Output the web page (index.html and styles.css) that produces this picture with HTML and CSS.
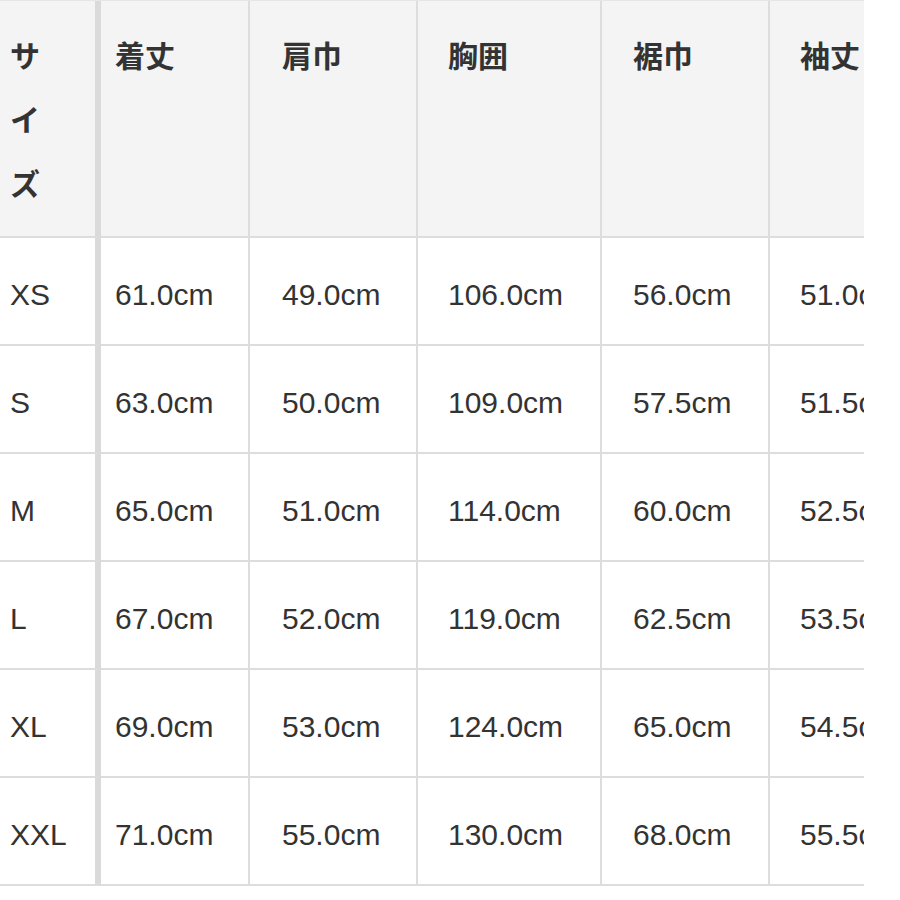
FILE: index.html
```html
<!DOCTYPE html>
<html lang="ja">
<head>
<meta charset="utf-8">
<link rel="stylesheet" href="styles.css">
</head>
<body>
<div class="wrap">
  <div class="grid">
    <div class="cell head c1">サ<br>イ<br>ズ</div>
    <div class="cell head c2">着丈</div>
    <div class="cell head c3">肩巾</div>
    <div class="cell head c4">胸囲</div>
    <div class="cell head c5">裾巾</div>
    <div class="cell head c6">袖丈</div>

    <div class="cell c1">XS</div>
    <div class="cell c2">61.0cm</div>
    <div class="cell c3">49.0cm</div>
    <div class="cell c4">106.0cm</div>
    <div class="cell c5">56.0cm</div>
    <div class="cell c6">51.0cm</div>

    <div class="cell c1">S</div>
    <div class="cell c2">63.0cm</div>
    <div class="cell c3">50.0cm</div>
    <div class="cell c4">109.0cm</div>
    <div class="cell c5">57.5cm</div>
    <div class="cell c6">51.5cm</div>

    <div class="cell c1">M</div>
    <div class="cell c2">65.0cm</div>
    <div class="cell c3">51.0cm</div>
    <div class="cell c4">114.0cm</div>
    <div class="cell c5">60.0cm</div>
    <div class="cell c6">52.5cm</div>

    <div class="cell c1">L</div>
    <div class="cell c2">67.0cm</div>
    <div class="cell c3">52.0cm</div>
    <div class="cell c4">119.0cm</div>
    <div class="cell c5">62.5cm</div>
    <div class="cell c6">53.5cm</div>

    <div class="cell c1">XL</div>
    <div class="cell c2">69.0cm</div>
    <div class="cell c3">53.0cm</div>
    <div class="cell c4">124.0cm</div>
    <div class="cell c5">65.0cm</div>
    <div class="cell c6">54.5cm</div>

    <div class="cell c1">XXL</div>
    <div class="cell c2">71.0cm</div>
    <div class="cell c3">55.0cm</div>
    <div class="cell c4">130.0cm</div>
    <div class="cell c5">68.0cm</div>
    <div class="cell c6">55.5cm</div>
  </div>
</div>
</body>
</html>
```

FILE: styles.css
```css
html, body {
  margin: 0;
  padding: 0;
  background: #ffffff;
}

.wrap {
  width: 864px;
  overflow: hidden;
}

.grid {
  display: grid;
  grid-template-columns: 101px 149px 168px 184px 168px 168px;
  grid-template-rows: 237px repeat(6, 108px);
  width: 938px;
  border-top: 1px solid #e6e6e6;
}

.cell {
  box-sizing: border-box;
  border-right: 2px solid #dddddd;
  border-bottom: 2px solid #dddddd;
  font-family: "Liberation Sans", Arial, "Noto Sans CJK JP", sans-serif;
  font-size: 30px;
  line-height: 30px;
  color: #333333;
  padding-top: 42px;
  white-space: nowrap;
}

.head {
  background: #f4f4f4;
  font-family: "Noto Sans CJK JP", sans-serif;
  font-weight: bold;
  line-height: 64px;
  padding-top: 21px;
}

.c1 {
  padding-left: 10px;
  border-right: 6px solid #dadada;
}

.c2 { padding-left: 14px; }
.c3 { padding-left: 32px; }
.c4 { padding-left: 30px; }
.c5 { padding-left: 31px; }
.c6 { padding-left: 30px; }
```
